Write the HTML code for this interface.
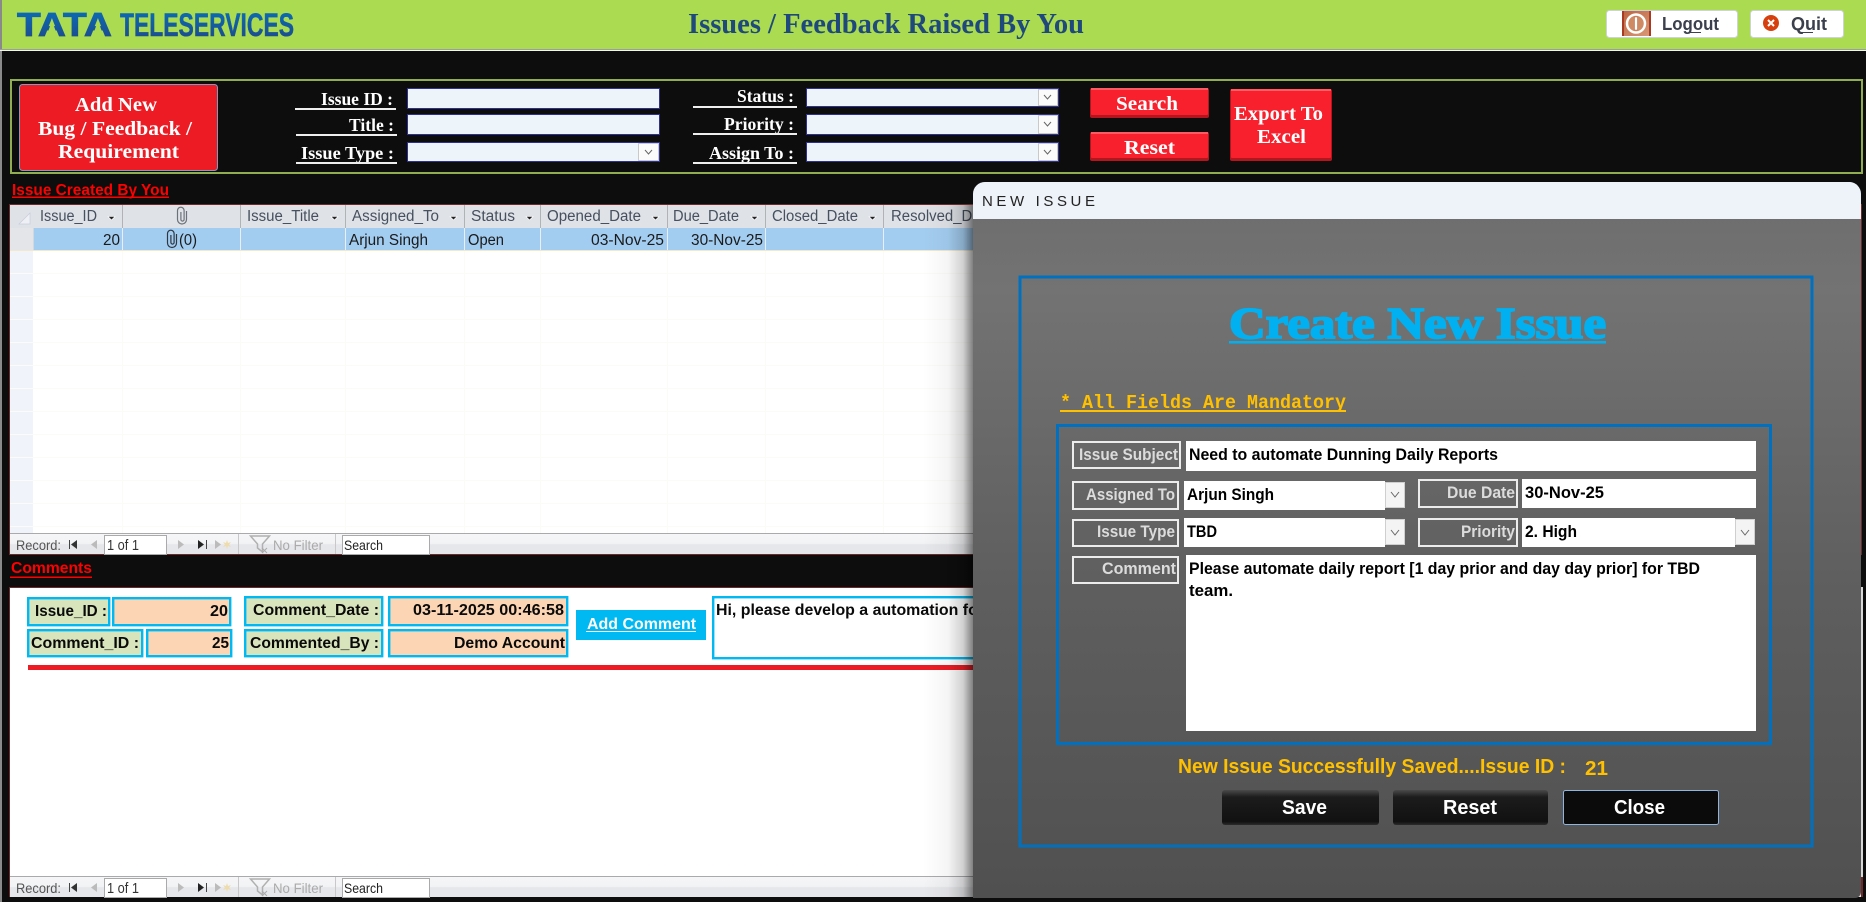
<!DOCTYPE html>
<html><head><meta charset="utf-8"><title>Issues / Feedback Raised By You</title>
<style>
html,body{margin:0;padding:0;background:#0d0d0d;width:1866px;height:902px;overflow:hidden}
svg{display:block}
text{white-space:pre}
.s{font-family:"Liberation Serif",serif;font-weight:bold}
.a{font-family:"Liberation Sans",sans-serif}
.b{font-family:"Liberation Sans",sans-serif;font-weight:bold}
.m{font-family:"Liberation Mono",monospace;font-weight:bold}
.lab{font-size:18px;fill:#fff}
.btn{font-size:20px;fill:#fff}
.h{font-size:15.5px;fill:#46505e}
.r{font-size:15.5px;fill:#1a1a1a}
.n{font-size:14px;fill:#555}
.c{font-size:16px;fill:#0a0a0a}
.d{font-size:16.5px;fill:#000}
.l{font-size:16.5px;fill:#dcdcdc}
.big{font-size:20px;fill:#fff}
</style></head><body>
<svg xmlns="http://www.w3.org/2000/svg" width="1866" height="902" viewBox="0 0 1866 902">
<defs>
<linearGradient id="lg" gradientUnits="userSpaceOnUse" x1="0" y1="12" x2="0" y2="36"><stop offset="0" stop-color="#0b6ab4"/><stop offset="1" stop-color="#1b4f91"/></linearGradient>
<linearGradient id="dlg" x1="0" y1="0" x2="0" y2="1"><stop offset="0" stop-color="#6c6c6c"/><stop offset=".15" stop-color="#737373"/><stop offset=".55" stop-color="#5f5f5f"/><stop offset="1" stop-color="#505050"/></linearGradient>
<linearGradient id="sh" x1="0" y1="0" x2="1" y2="0"><stop offset="0" stop-color="#000" stop-opacity="0"/><stop offset=".5" stop-color="#000" stop-opacity=".04"/><stop offset=".8" stop-color="#000" stop-opacity=".18"/><stop offset="1" stop-color="#000" stop-opacity=".5"/></linearGradient>
<linearGradient id="nav" x1="0" y1="0" x2="0" y2="1"><stop offset="0" stop-color="#f6f6f8"/><stop offset=".5" stop-color="#f2f3f5"/><stop offset=".55" stop-color="#e6e7ea"/><stop offset="1" stop-color="#e6e7ea"/></linearGradient>
<linearGradient id="blk" x1="0" y1="0" x2="0" y2="1"><stop offset="0" stop-color="#4a4a4a"/><stop offset=".2" stop-color="#1c1c1c"/><stop offset=".9" stop-color="#111"/><stop offset="1" stop-color="#2c2c2c"/></linearGradient>
<linearGradient id="ico" x1="0" y1="0" x2="1" y2="1"><stop offset="0" stop-color="#bd6340"/><stop offset="1" stop-color="#d99a78"/></linearGradient>
<clipPath id="dc"><path d="M973 194a12 12 0 0 1 12-12H1850a12 12 0 0 1 11 12V892a6 6 0 0 1-6 6H973Z"/></clipPath>
</defs>

<!-- header -->
<rect width="1866" height="902" fill="#0d0d0d"/>
<rect x="0" y="0" width="2" height="902" fill="#8a8a8a"/>
<rect x="2" y="0" width="1864" height="49" fill="#aadb50"/>
<rect x="0" y="49" width="1866" height="1" fill="#9a9f98"/>
<rect x="0" y="50" width="1866" height="1" fill="#f4f4f4"/>
<text class="b" x="17" y="36" font-size="33" textLength="95" lengthAdjust="spacingAndGlyphs" fill="url(#lg)" stroke="url(#lg)" stroke-width=".8">TATA</text>
<path d="M52 21L46 37H58Z" fill="#aadb50"/><path d="M98 21L92 37H104Z" fill="#aadb50"/>
<text class="b" x="120" y="36" font-size="32" textLength="174" lengthAdjust="spacingAndGlyphs" fill="url(#lg)" stroke="url(#lg)" stroke-width=".5">TELESERVICES</text>
<text class="s" x="688" y="33" font-size="28" textLength="396" lengthAdjust="spacingAndGlyphs" fill="#1f497d">Issues / Feedback Raised By You</text>

<rect x="1606.500" y="10.500" width="131" height="27" rx="3" fill="#fff" stroke="#cfd2d8"/>
<rect x="1622" y="11" width="29" height="25" rx="2" fill="url(#ico)"/>
<rect x="1622" y="11" width="2" height="25" fill="#a83a22"/><rect x="1649" y="11" width="2" height="25" fill="#a83a22"/>
<circle cx="1636" cy="23.500" r="9" fill="#cf8a63" stroke="#fff" stroke-width="2.500"/>
<rect x="1634.500" y="17" width="3" height="13" fill="#fff" stroke="#b5603f" stroke-width=".5"/>
<text class="b" x="1662" y="30" font-size="18" textLength="57" lengthAdjust="spacingAndGlyphs" fill="#3b404c">Logout</text>
<rect x="1690" y="32" width="11" height="1" fill="#3b404c"/>
<rect x="1750.500" y="10.500" width="93" height="27" rx="3" fill="#fff" stroke="#cfd2d8"/>
<circle cx="1771" cy="23" r="8" fill="#d6400e"/>
<path d="M1768 20l6 6M1774 20l-6 6" stroke="#fff" stroke-width="2"/>
<text class="b" x="1791" y="30" font-size="18" textLength="36" lengthAdjust="spacingAndGlyphs" fill="#3b404c">Quit</text>
<rect x="1803" y="32" width="10" height="1" fill="#3b404c"/>

<!-- filter frame -->
<rect x="11" y="80" width="1851" height="93" fill="none" stroke="#90ae50" stroke-width="2"/>
<rect x="19.500" y="84.500" width="198" height="86" rx="3" fill="#ed1c24" stroke="#7f9cc0"/>
<text class="s btn" x="75" y="111" textLength="82" lengthAdjust="spacingAndGlyphs">Add New</text>
<text class="s btn" x="38" y="135" textLength="154" lengthAdjust="spacingAndGlyphs">Bug / Feedback /</text>
<text class="s btn" x="58" y="158" textLength="121" lengthAdjust="spacingAndGlyphs">Requirement</text>

<text class="s lab" x="321" y="105" textLength="72" lengthAdjust="spacingAndGlyphs">Issue ID :</text>
<rect x="295" y="108" width="101" height="2" fill="#eee"/>
<text class="s lab" x="349" y="131" textLength="45" lengthAdjust="spacingAndGlyphs">Title :</text>
<rect x="296" y="134" width="101" height="2" fill="#eee"/>
<text class="s lab" x="301" y="159" textLength="93" lengthAdjust="spacingAndGlyphs">Issue Type :</text>
<rect x="296" y="162" width="101" height="2" fill="#eee"/>
<rect x="407.500" y="88.500" width="252" height="20" fill="#eef5fa" stroke="#2e3192"/>
<rect x="407.500" y="114.500" width="252" height="20" fill="#eef5fa" stroke="#2e3192"/>
<rect x="407.500" y="142.500" width="252" height="19" fill="#eef5fa" stroke="#2e3192"/>
<rect x="638.500" y="143.500" width="20" height="17" fill="#fbfbfb" stroke="#c9c9c9"/>
<path d="M645 150l3.500 4 3.500-4" fill="none" stroke="#666"/>

<text class="s lab" x="737" y="102" textLength="57" lengthAdjust="spacingAndGlyphs">Status :</text>
<rect x="693" y="106" width="104" height="2" fill="#eee"/>
<text class="s lab" x="724" y="130" textLength="70" lengthAdjust="spacingAndGlyphs">Priority :</text>
<rect x="693" y="133" width="104" height="2" fill="#eee"/>
<text class="s lab" x="709" y="159" textLength="85" lengthAdjust="spacingAndGlyphs">Assign To :</text>
<rect x="693" y="162" width="104" height="2" fill="#eee"/>
<rect x="806.500" y="88.500" width="252" height="18" fill="#eef5fa" stroke="#2e3192"/>
<rect x="806.500" y="114.500" width="252" height="20" fill="#eef5fa" stroke="#2e3192"/>
<rect x="806.500" y="142.500" width="252" height="19" fill="#eef5fa" stroke="#2e3192"/>
<rect x="1038.500" y="89.500" width="19" height="16" fill="#fbfbfb" stroke="#c9c9c9"/>
<path d="M1044 95l3.500 4 3.500-4" fill="none" stroke="#666"/>
<rect x="1038.500" y="115.500" width="19" height="18" fill="#fbfbfb" stroke="#c9c9c9"/>
<path d="M1044 122l3.500 4 3.500-4" fill="none" stroke="#666"/>
<rect x="1038.500" y="143.500" width="19" height="17" fill="#fbfbfb" stroke="#c9c9c9"/>
<path d="M1044 150l3.500 4 3.500-4" fill="none" stroke="#666"/>

<rect x="1090" y="88" width="119" height="30" rx="2" fill="#b3161f"/><rect x="1091" y="89" width="117" height="26" rx="1" fill="#f8202c"/><rect x="1091" y="88" width="117" height="2" fill="#ff5a63"/>
<text class="s btn" x="1116" y="110" textLength="62" lengthAdjust="spacingAndGlyphs">Search</text>
<rect x="1090" y="132" width="119" height="29" rx="2" fill="#b3161f"/><rect x="1091" y="133" width="117" height="25" rx="1" fill="#f8202c"/><rect x="1091" y="132" width="117" height="2" fill="#ff5a63"/>
<text class="s btn" x="1124" y="154" textLength="51" lengthAdjust="spacingAndGlyphs">Reset</text>
<rect x="1230" y="89" width="102" height="72" rx="2" fill="#b3161f"/><rect x="1231" y="90" width="100" height="68" rx="1" fill="#f8202c"/><rect x="1231" y="89" width="100" height="2" fill="#ff5a63"/>
<text class="s btn" x="1234" y="120" textLength="89" lengthAdjust="spacingAndGlyphs">Export To</text>
<text class="s btn" x="1257" y="143" textLength="49" lengthAdjust="spacingAndGlyphs">Excel</text>

<!-- issue grid -->
<text class="b" x="12" y="195" font-size="16" textLength="157" lengthAdjust="spacingAndGlyphs" fill="#f00">Issue Created By You</text>
<rect x="12" y="196.500" width="157" height="1.500" fill="#f00"/>
<rect x="9" y="204" width="1853" height="351" fill="#6e2a2a"/>
<rect x="10" y="205" width="1851" height="349" fill="#fff"/>
<rect x="10" y="205" width="1851" height="23" fill="#dfe2e7"/>
<rect x="10" y="228" width="23" height="22" fill="#e3e5e9"/>
<rect x="33" y="228" width="1828" height="22" fill="#a3cdf0"/>
<rect x="10" y="250" width="23" height="283" fill="#f1f3fa"/>
<rect x="10" y="250" width="1851" height="1" fill="#f3e8cc"/>
<g fill="#fbfbf8">
<rect x="10" y="273" width="1851" height="1"/><rect x="10" y="296" width="1851" height="1"/><rect x="10" y="319" width="1851" height="1"/><rect x="10" y="342" width="1851" height="1"/><rect x="10" y="365" width="1851" height="1"/><rect x="10" y="388" width="1851" height="1"/><rect x="10" y="411" width="1851" height="1"/><rect x="10" y="434" width="1851" height="1"/><rect x="10" y="457" width="1851" height="1"/><rect x="10" y="480" width="1851" height="1"/><rect x="10" y="503" width="1851" height="1"/><rect x="10" y="526" width="1851" height="1"/>
<rect x="122" y="251" width="1" height="282"/><rect x="240" y="251" width="1" height="282"/><rect x="345" y="251" width="1" height="282"/><rect x="464" y="251" width="1" height="282"/><rect x="540" y="251" width="1" height="282"/><rect x="667" y="251" width="1" height="282"/><rect x="765" y="251" width="1" height="282"/><rect x="883" y="251" width="1" height="282"/>
</g>
<g fill="#b0b2b6">
<rect x="122" y="205" width="1" height="23"/><rect x="240" y="205" width="1" height="23"/><rect x="345" y="205" width="1" height="23"/><rect x="464" y="205" width="1" height="23"/><rect x="540" y="205" width="1" height="23"/><rect x="667" y="205" width="1" height="23"/><rect x="765" y="205" width="1" height="23"/><rect x="883" y="205" width="1" height="23"/>
</g>
<g fill="#e8eff5">
<rect x="33" y="228" width="1" height="22" fill="#d0d8e0"/><rect x="122" y="228" width="1" height="22"/><rect x="240" y="228" width="1" height="22"/><rect x="345" y="228" width="1" height="22"/><rect x="464" y="228" width="1" height="22"/><rect x="540" y="228" width="1" height="22"/><rect x="667" y="228" width="1" height="22"/><rect x="765" y="228" width="1" height="22"/><rect x="883" y="228" width="1" height="22"/>
</g>
<path d="M19 224L30 213V224Z" fill="#eef0f5" stroke="#c8cdda" stroke-width=".7"/>
<text class="a h" x="40" y="221" textLength="57" lengthAdjust="spacingAndGlyphs">Issue_ID</text>
<text class="a h" x="247" y="221" textLength="72" lengthAdjust="spacingAndGlyphs">Issue_Title</text>
<text class="a h" x="352" y="221" textLength="87" lengthAdjust="spacingAndGlyphs">Assigned_To</text>
<text class="a h" x="471" y="221" textLength="44" lengthAdjust="spacingAndGlyphs">Status</text>
<text class="a h" x="547" y="221" textLength="94" lengthAdjust="spacingAndGlyphs">Opened_Date</text>
<text class="a h" x="673" y="221" textLength="66" lengthAdjust="spacingAndGlyphs">Due_Date</text>
<text class="a h" x="772" y="221" textLength="86" lengthAdjust="spacingAndGlyphs">Closed_Date</text>
<text class="a h" x="891" y="221" textLength="102" lengthAdjust="spacingAndGlyphs">Resolved_Date</text>
<g fill="#222" stroke="#fff" stroke-width=".6">
<path d="M108 216.500h7l-3.500 3.500Z"/><path d="M331 216.500h7l-3.500 3.500Z"/><path d="M450 216.500h7l-3.500 3.500Z"/><path d="M526 216.500h7l-3.500 3.500Z"/><path d="M652 216.500h7l-3.500 3.500Z"/><path d="M751 216.500h7l-3.500 3.500Z"/><path d="M869 216.500h7l-3.500 3.500Z"/>
</g>
<path d="M186.500 211v8.500a4.500 4.500 0 0 1-9 0V210.500a3.300 3.300 0 0 1 6.600 0v9a1.600 1.600 0 0 1-3.200 0v-7.500" fill="none" stroke="#6c7078" stroke-width="1.200"/>
<path d="M176.500 234v9a4.500 4.500 0 0 1-9 0V233.500a3.300 3.300 0 0 1 6.600 0v9a1.600 1.600 0 0 1-3.200 0v-7.500" fill="none" stroke="#2f3640" stroke-width="1.200"/>
<text class="a r" x="103" y="245" textLength="17" lengthAdjust="spacingAndGlyphs">20</text>
<text class="a r" x="179" y="245" textLength="18" lengthAdjust="spacingAndGlyphs">(0)</text>
<text class="a r" x="349" y="245" textLength="79" lengthAdjust="spacingAndGlyphs">Arjun Singh</text>
<text class="a r" x="468" y="245" textLength="36" lengthAdjust="spacingAndGlyphs">Open</text>
<text class="a r" x="591" y="245" textLength="73" lengthAdjust="spacingAndGlyphs">03-Nov-25</text>
<text class="a r" x="691" y="245" textLength="72" lengthAdjust="spacingAndGlyphs">30-Nov-25</text>

<!-- nav top -->
<rect x="10" y="533" width="1851" height="21" fill="url(#nav)"/>
<rect x="10" y="533" width="1851" height="1" fill="#aaaaac"/>
<text class="a n" x="16" y="550" textLength="45" lengthAdjust="spacingAndGlyphs">Record:</text>
<path d="M69.500 540v9" stroke="#444"/><path d="M77 540v9l-6-4.500Z" fill="#333"/>
<path d="M97 540v9l-6-4.500Z" fill="#bbb"/>
<rect x="104.500" y="535.500" width="62" height="19" fill="#fff" stroke="#aaa"/>
<text class="a" x="107" y="550" font-size="15" textLength="32" lengthAdjust="spacingAndGlyphs" fill="#333">1 of 1</text>
<path d="M178 540v9l6-4.500Z" fill="#bbb"/>
<path d="M198 540v9l6-4.500Z" fill="#222"/><path d="M206.500 540v9" stroke="#444"/>
<path d="M215 540v9l6-4.500Z" fill="#bbb"/>
<path d="M227 540l1 3 3-1-2 2.500 2 2.500-3-1-1 3-1-3-3 1 2-2.500-2-2.500 3 1Z" fill="#eedcae"/>
<rect x="238" y="534" width="1" height="20" fill="#c8c8c8"/>
<path d="M250.500 536h19l-7 8v8l-5-4v-4Z" fill="none" stroke="#b0b0b0" stroke-width="1.500"/>
<path d="M262 548l5 5M267 548l-5 5" stroke="#aaa"/>
<text class="a" x="273" y="550" font-size="14" textLength="50" lengthAdjust="spacingAndGlyphs" fill="#aaa">No Filter</text>
<rect x="335" y="534" width="1" height="20" fill="#c8c8c8"/>
<rect x="342.500" y="535.500" width="87" height="19" fill="#fff" stroke="#aaa"/>
<text class="a" x="344" y="550" font-size="14" textLength="39" lengthAdjust="spacingAndGlyphs" fill="#222">Search</text>

<!-- comments -->
<text class="b" x="11" y="573" font-size="16" textLength="81" lengthAdjust="spacingAndGlyphs" fill="#f00">Comments</text>
<rect x="10" y="576.500" width="82" height="1.500" fill="#f00"/>
<rect x="9" y="587" width="1854" height="310" fill="#6e2a2a"/>
<rect x="10" y="588" width="1853" height="288" fill="#fff"/>

<g stroke="#00b9f2" stroke-width="2.400">
<rect x="28.200" y="598.200" width="81" height="27" fill="#d8e4bc"/>
<rect x="113.200" y="598.200" width="117" height="27" fill="#fcd5b4"/>
<rect x="28.200" y="630.200" width="114" height="26" fill="#d8e4bc"/>
<rect x="147.200" y="630.200" width="84" height="26" fill="#fcd5b4"/>
<rect x="245.200" y="597.200" width="137" height="28" fill="#d8e4bc"/>
<rect x="389.200" y="597.200" width="178" height="28" fill="#fcd5b4"/>
<rect x="245.200" y="630.200" width="137" height="26" fill="#d8e4bc"/>
<rect x="389.200" y="630.200" width="178" height="26" fill="#fcd5b4"/>
<rect x="713.200" y="597.200" width="400" height="61" fill="#fff"/>
</g>
<text class="b c" x="35" y="616" textLength="72" lengthAdjust="spacingAndGlyphs">Issue_ID :</text>
<text class="b c" x="210" y="616" textLength="18" lengthAdjust="spacingAndGlyphs">20</text>
<text class="b c" x="31" y="648" textLength="108" lengthAdjust="spacingAndGlyphs">Comment_ID :</text>
<text class="b c" x="212" y="648" textLength="17" lengthAdjust="spacingAndGlyphs">25</text>
<text class="b c" x="253" y="615" textLength="126" lengthAdjust="spacingAndGlyphs">Comment_Date :</text>
<text class="b c" x="413" y="615" textLength="151" lengthAdjust="spacingAndGlyphs">03-11-2025 00:46:58</text>
<text class="b c" x="250" y="648" textLength="129" lengthAdjust="spacingAndGlyphs">Commented_By :</text>
<text class="b c" x="454" y="648" textLength="111" lengthAdjust="spacingAndGlyphs">Demo Account</text>
<rect x="576" y="610" width="130" height="30" fill="#00b9f2"/>
<text class="b" x="587" y="629" font-size="16" textLength="109" lengthAdjust="spacingAndGlyphs" fill="#fff">Add Comment</text>
<rect x="586" y="631" width="110" height="1" fill="#fff"/>
<text class="b c" x="716" y="615" textLength="268" lengthAdjust="spacingAndGlyphs">Hi, please develop a automation for</text>
<rect x="28" y="665" width="1000" height="5" fill="#ed1c24"/>

<!-- nav bottom -->
<rect x="10" y="876" width="1851" height="21" fill="url(#nav)"/>
<rect x="10" y="876" width="1851" height="1" fill="#aaaaac"/>
<text class="a n" x="16" y="893" textLength="45" lengthAdjust="spacingAndGlyphs">Record:</text>
<path d="M69.500 883v9" stroke="#444"/><path d="M77 883v9l-6-4.500Z" fill="#333"/>
<path d="M97 883v9l-6-4.500Z" fill="#bbb"/>
<rect x="104.500" y="878.500" width="62" height="19" fill="#fff" stroke="#aaa"/>
<text class="a" x="107" y="893" font-size="15" textLength="32" lengthAdjust="spacingAndGlyphs" fill="#333">1 of 1</text>
<path d="M178 883v9l6-4.500Z" fill="#bbb"/>
<path d="M198 883v9l6-4.500Z" fill="#222"/><path d="M206.500 883v9" stroke="#444"/>
<path d="M215 883v9l6-4.500Z" fill="#bbb"/>
<path d="M227 883l1 3 3-1-2 2.500 2 2.500-3-1-1 3-1-3-3 1 2-2.500-2-2.500 3 1Z" fill="#eedcae"/>
<rect x="238" y="877" width="1" height="20" fill="#c8c8c8"/>
<path d="M250.500 879h19l-7 8v8l-5-4v-4Z" fill="none" stroke="#b0b0b0" stroke-width="1.500"/>
<path d="M262 891l5 5M267 891l-5 5" stroke="#aaa"/>
<text class="a" x="273" y="893" font-size="14" textLength="50" lengthAdjust="spacingAndGlyphs" fill="#aaa">No Filter</text>
<rect x="335" y="877" width="1" height="20" fill="#c8c8c8"/>
<rect x="342.500" y="878.500" width="87" height="19" fill="#fff" stroke="#aaa"/>
<text class="a" x="344" y="893" font-size="14" textLength="39" lengthAdjust="spacingAndGlyphs" fill="#222">Search</text>

<!-- dialog shadow -->
<rect x="923" y="205" width="50" height="692" fill="url(#sh)"/>
<rect x="1861" y="587" width="2" height="290" fill="#d8d8d8"/>

<!-- dialog -->
<g clip-path="url(#dc)">
<rect x="973" y="182" width="889" height="716" fill="url(#dlg)"/>
<rect x="973" y="182" width="889" height="37" fill="#edf3f8"/>
</g>
<text class="a" x="982" y="206" font-size="15" textLength="113" lengthAdjust="spacing" fill="#222">N E W   I S S U E</text>

<rect x="1020" y="277" width="792" height="569" fill="none" stroke="#0070c0" stroke-width="3"/>
<text class="s" x="1229" y="338" font-size="44" textLength="377" lengthAdjust="spacingAndGlyphs" fill="#00b0f0" stroke="#00b0f0" stroke-width="1.800">Create New Issue</text>
<rect x="1229" y="341" width="377" height="2.500" fill="#00b0f0"/>
<text class="m" x="1060" y="408" font-size="19" textLength="286" lengthAdjust="spacingAndGlyphs" fill="#ffc000">* All Fields Are Mandatory</text>
<rect x="1060" y="410" width="286" height="2" fill="#ffc000"/>

<rect x="1057.500" y="425.500" width="713" height="318" fill="none" stroke="#0070c0" stroke-width="3"/>

<g fill="none" stroke="#ececec" stroke-width="2">
<rect x="1073" y="442" width="107" height="26"/>
<rect x="1073" y="482" width="105" height="27"/>
<rect x="1419" y="480" width="98" height="27"/>
<rect x="1073" y="520" width="105" height="26"/>
<rect x="1419" y="519" width="98" height="27"/>
<rect x="1073" y="557" width="105" height="26"/>
</g>
<g fill="#fff">
<rect x="1186" y="441" width="570" height="30"/>
<rect x="1184" y="481" width="201" height="29"/>
<rect x="1522" y="479" width="234" height="29"/>
<rect x="1184" y="518" width="201" height="29"/>
<rect x="1522" y="518" width="213" height="29"/>
<rect x="1186" y="555" width="570" height="176"/>
</g>
<g fill="#f4f4f4" stroke="#cfcfcf">
<rect x="1385.500" y="482.500" width="19" height="25"/>
<rect x="1385.500" y="519.500" width="19" height="25"/>
<rect x="1735.500" y="519.500" width="19" height="25"/>
</g>
<g fill="none" stroke="#666">
<path d="M1391 492l4 5 4-5"/><path d="M1391 530l4 5 4-5"/><path d="M1741 530l4 5 4-5"/>
</g>
<text class="b l" x="1079" y="460" textLength="99" lengthAdjust="spacingAndGlyphs">Issue Subject</text>
<text class="b l" x="1086" y="500" textLength="89" lengthAdjust="spacingAndGlyphs">Assigned To</text>
<text class="b l" x="1447" y="498" textLength="68" lengthAdjust="spacingAndGlyphs">Due Date</text>
<text class="b l" x="1097" y="537" textLength="78" lengthAdjust="spacingAndGlyphs">Issue Type</text>
<text class="b l" x="1461" y="537" textLength="54" lengthAdjust="spacingAndGlyphs">Priority</text>
<text class="b l" x="1102" y="574" textLength="74" lengthAdjust="spacingAndGlyphs">Comment</text>
<text class="b d" x="1189" y="460" textLength="309" lengthAdjust="spacingAndGlyphs">Need to automate Dunning Daily Reports</text>
<text class="b d" x="1187" y="500" textLength="87" lengthAdjust="spacingAndGlyphs">Arjun Singh</text>
<text class="b d" x="1525" y="498" textLength="79" lengthAdjust="spacingAndGlyphs">30-Nov-25</text>
<text class="b d" x="1187" y="537" textLength="30" lengthAdjust="spacingAndGlyphs">TBD</text>
<text class="b d" x="1525" y="537" textLength="52" lengthAdjust="spacingAndGlyphs">2. High</text>
<text class="b d" x="1189" y="574" textLength="511" lengthAdjust="spacingAndGlyphs">Please automate daily report [1 day prior and day day prior] for TBD</text>
<text class="b d" x="1189" y="596" textLength="44" lengthAdjust="spacingAndGlyphs">team.</text>

<text class="b" x="1178" y="773" font-size="20" textLength="388" lengthAdjust="spacingAndGlyphs" fill="#ffc000">New Issue Successfully Saved....Issue ID :</text>
<text class="b" x="1585" y="775" font-size="20" textLength="23" lengthAdjust="spacingAndGlyphs" fill="#ffc000">21</text>

<rect x="1222" y="790" width="157" height="35" rx="3" fill="url(#blk)"/>
<rect x="1393" y="790" width="155" height="35" rx="3" fill="url(#blk)"/>
<rect x="1563.500" y="790.500" width="155" height="34" rx="2" fill="#0b0b0b" stroke="#8db4e2"/>
<text class="b big" x="1282" y="814" textLength="45" lengthAdjust="spacingAndGlyphs">Save</text>
<text class="b big" x="1443" y="814" textLength="54" lengthAdjust="spacingAndGlyphs">Reset</text>
<text class="b big" x="1614" y="814" textLength="51" lengthAdjust="spacingAndGlyphs">Close</text>
</svg>
</body></html>
